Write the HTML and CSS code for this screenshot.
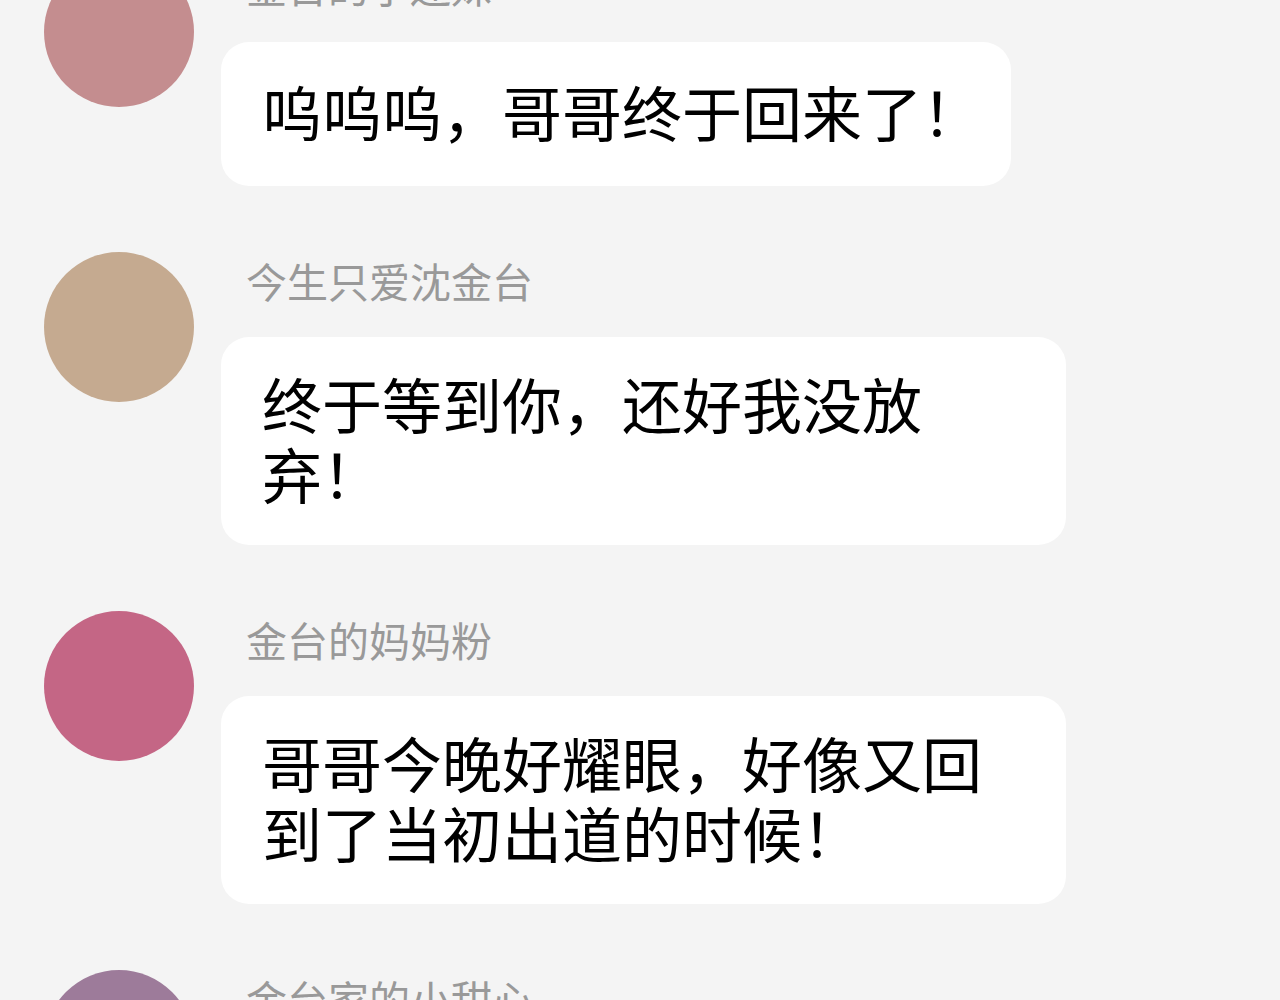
FILE: index.html
```html
<!DOCTYPE html>
<html lang="zh-CN">
<head>
    <meta charset="UTF-8">
    <meta name="viewport" content="width=device-width, initial-scale=1.0">
    <title>评论</title>
    <link rel="stylesheet" href="styles.css">
</head>
<body>

    <div class="comments">
        <div class="comment">
            <div class="avatar avatar-rose"></div>
            <div class="comment-body">
                <div class="name">金台的小迷妹</div>
                <div class="bubble">呜呜呜，哥哥终于回来了！</div>
            </div>
        </div>

        <div class="comment">
            <div class="avatar avatar-tan"></div>
            <div class="comment-body">
                <div class="name">今生只爱沈金台</div>
                <div class="bubble">终于等到你，还好我没放弃！</div>
            </div>
        </div>

        <div class="comment">
            <div class="avatar avatar-pink"></div>
            <div class="comment-body">
                <div class="name">金台的妈妈粉</div>
                <div class="bubble">哥哥今晚好耀眼，好像又回到了当初出道的时候！</div>
            </div>
        </div>

        <div class="comment">
            <div class="avatar avatar-purple"></div>
            <div class="comment-body">
                <div class="name">金台家的小甜心</div>
                <div class="bubble">今天也是爱哥哥的一天！</div>
            </div>
        </div>
    </div>

</body>
</html>
```

FILE: styles.css
```css
* {
    margin: 0;
    padding: 0;
    box-sizing: border-box;
}

body {
    font-family: "Noto Sans CJK SC", "Noto Sans", sans-serif;
    background-color: #f4f4f4;
    height: 1000px;
    overflow: hidden;
}

.comments {
    margin-top: -43px;
    padding-left: 44px;
}

.comment {
    display: flex;
    align-items: flex-start;
    gap: 27px;
    margin-bottom: 66px;
}

.avatar {
    width: 150px;
    height: 150px;
    border-radius: 50%;
    flex-shrink: 0;
}

.avatar-rose {
    background-color: #c48d8f;
}

.avatar-tan {
    background-color: #c5aa90;
}

.avatar-pink {
    background-color: #c46685;
}

.avatar-purple {
    background-color: #9d7b9a;
}

.comment-body {
    display: flex;
    flex-direction: column;
    align-items: flex-start;
}

.name {
    font-size: 41px;
    line-height: 56px;
    color: #999;
    padding-left: 25px;
}

.bubble {
    margin-top: 29px;
    max-width: 845px;
    min-height: 144px;
    display: flex;
    align-items: center;
    background-color: #fff;
    border-radius: 28px;
    padding: 31px 29px 37px 41px;
    font-size: 60px;
    line-height: 70px;
    color: #000;
}
```
